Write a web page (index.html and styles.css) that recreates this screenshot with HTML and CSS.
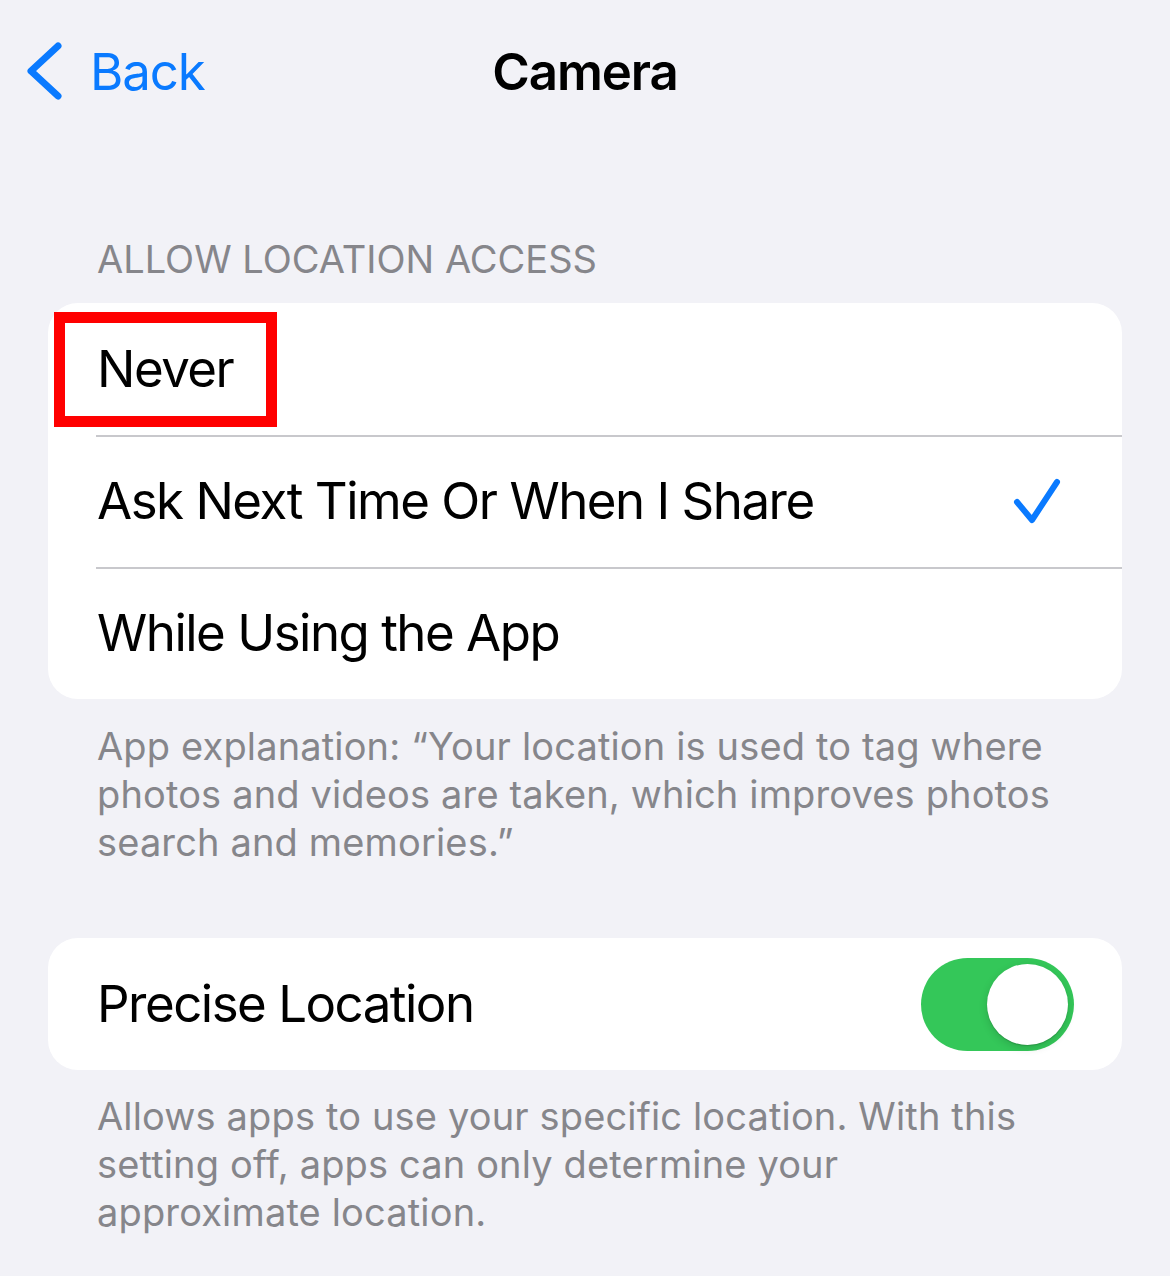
FILE: index.html
```html
<!DOCTYPE html>
<html lang="en">
<head>
<meta charset="utf-8">
<title>Camera</title>
<link rel="stylesheet" href="styles.css">
</head>
<body>
<div class="screen">
  <nav class="navbar">
    <a class="back" href="#">
      <svg class="back-chevron" viewBox="0 0 40 60" width="40" height="60" aria-hidden="true">
        <path d="M34 4 L7 29 L34 54" fill="none" stroke="currentColor" stroke-width="7" stroke-linecap="round" stroke-linejoin="round"/>
      </svg>
      <span class="back-label">Back</span>
    </a>
    <h1 class="nav-title">Camera</h1>
    <span class="nav-spacer"></span>
  </nav>

  <section class="group group-access">
    <h2 class="group-header">ALLOW LOCATION ACCESS</h2>
    <ul class="card">
      <li class="row row-highlight">
        <span class="row-label">Never</span>
        <span class="mark-box" aria-hidden="true"></span>
      </li>
      <li class="row">
        <span class="row-label">Ask Next Time Or When I Share</span>
        <svg class="check" viewBox="0 0 50 50" width="50" height="50" aria-hidden="true">
          <path d="M5 26 L20 44 L45 6" fill="none" stroke="currentColor" stroke-width="6" stroke-linecap="round" stroke-linejoin="round"/>
        </svg>
      </li>
      <li class="row">
        <span class="row-label">While Using the App</span>
      </li>
    </ul>
    <p class="group-footer">App explanation: “Your location is used to tag where photos and videos are taken, which improves photos search and memories.”</p>
  </section>

  <section class="group group-precise">
    <ul class="card">
      <li class="row row-toggle">
        <span class="row-label">Precise Location</span>
        <span class="switch is-on" role="switch" aria-checked="true"><span class="switch-knob"></span></span>
      </li>
    </ul>
    <p class="group-footer">Allows apps to use your specific location. With this setting off, apps can only determine your approximate location.</p>
  </section>
</div>
</body>
</html>
```

FILE: styles.css
```css
* {
  box-sizing: border-box;
}

html, body {
  margin: 0;
  padding: 0;
  background: #f2f2f7;
}

body {
  font-family: "Inter", "Noto Sans", "Liberation Sans", sans-serif;
  color: #000;
  -webkit-font-smoothing: antialiased;
}

.screen {
  width: 1170px;
  min-height: 1276px;
  background: #f2f2f7;
}

/* Navigation bar */
.navbar {
  height: 144px;
  display: grid;
  grid-template-columns: 1fr auto 1fr;
  align-items: center;
}

.back {
  display: flex;
  align-items: center;
  padding-left: 24px;
  color: #0a7aff;
  text-decoration: none;
}

.back-chevron {
  display: block;
  flex: none;
}

.back-label {
  margin-left: 26px;
  font-size: 51px;
  letter-spacing: -1.1px;
  line-height: 60px;
}

.nav-title {
  margin: 0;
  font-size: 51px;
  font-weight: 600;
  letter-spacing: -1.1px;
  line-height: 60px;
}

/* Grouped list sections */
.group {
  padding: 0 48px;
}

.group-access {
  padding-top: 91px;
}

.group-precise {
  padding-top: 72px;
}

.group-header {
  margin: 0 0 20px;
  padding-left: 49px;
  font-size: 38px;
  font-weight: 400;
  line-height: 48px;
  letter-spacing: 0;
  color: #86868b;
}

.card {
  list-style: none;
  margin: 0;
  padding: 0;
  background: #fff;
  border-radius: 30px;
}

.row {
  position: relative;
  height: 132px;
  display: flex;
  align-items: center;
  justify-content: space-between;
  padding: 0 60px 0 49px;
}

.row + .row::before {
  content: "";
  position: absolute;
  top: 0;
  left: 48px;
  right: 0;
  height: 2px;
  background: #c8c8cc;
}

.row-label {
  font-size: 51px;
  letter-spacing: -1.5px;
  line-height: 60px;
}

.check {
  display: block;
  color: #0a7aff;
}

/* Red annotation frame around the first option */
.mark-box {
  position: absolute;
  left: 6px;
  top: 9px;
  width: 223px;
  height: 115px;
  border: 11px solid #ff0000;
}

.row-toggle {
  padding-right: 48px;
}

.switch {
  position: relative;
  display: block;
  width: 153px;
  height: 93px;
  border-radius: 47px;
  background: #34c759;
}

.switch-knob {
  position: absolute;
  top: 6px;
  right: 6px;
  width: 81px;
  height: 81px;
  border-radius: 50%;
  background: #fff;
  box-shadow: 0 3px 8px rgba(0, 0, 0, 0.15), 0 1px 1px rgba(0, 0, 0, 0.16);
}

.group-footer {
  margin: 23px 0 0;
  padding: 0 56px 0 49px;
  font-size: 38px;
  line-height: 48px;
  letter-spacing: 0.15px;
  color: #86868b;
}

.group-precise .group-footer {
  margin-top: 22px;
}
```
